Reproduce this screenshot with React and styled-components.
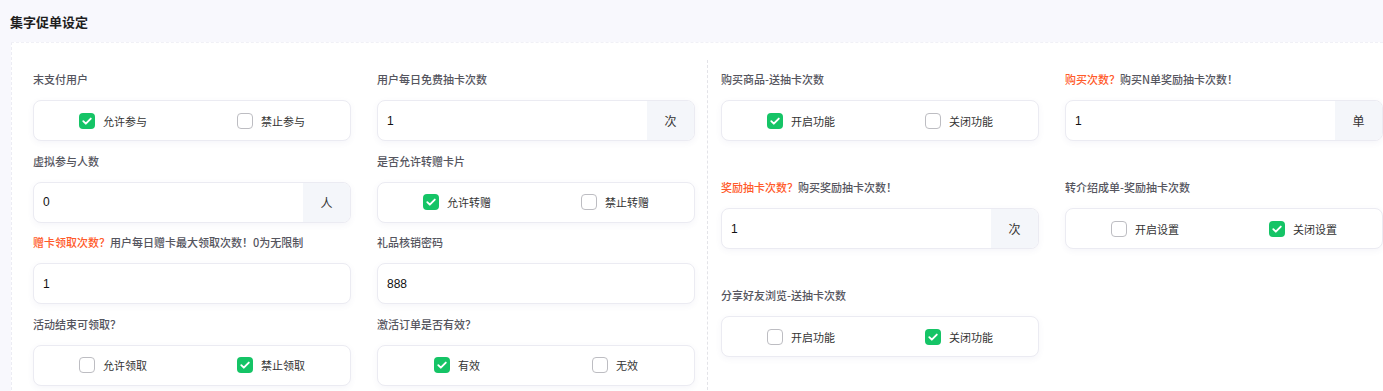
import React from 'react';
import styled, { createGlobalStyle } from 'styled-components';

const GlobalStyle = createGlobalStyle`
  body {
    margin: 0;
    background: #f8f8fd;
    font-family: "Noto Sans CJK SC", "Noto Sans", "Liberation Sans", sans-serif;
  }
`;

const Page = styled.div`
  width: 1383px;
  overflow: hidden;
`;

const Header = styled.div`
  height: 42px;
  padding-left: 10px;
  display: flex;
  align-items: center;
  font-size: 13px;
  font-weight: 700;
  color: #1f1f1f;
  box-sizing: border-box;
`;

const Card = styled.div`
  margin-left: 11px;
  background: #fff;
  border-top: 1px dashed #f0f0f6;
  border-left: 1px dashed #ececf4;
  padding: 17px 0 20px 21px;
  display: flex;
  align-items: stretch;
  min-height: 340px;
`;

const Section = styled.div`
  display: grid;
  grid-template-columns: 318px 318px;
  column-gap: 26px;
  row-gap: ${(p) => p.$rowGap}px;
  align-content: start;
  padding-top: 11px;
`;

const RightSection = styled(Section)`
  margin-left: 12px;
  padding-left: 13px;
  border-left: 1px dashed #e3e3e8;
`;

const Item = styled.div`
  display: flex;
  flex-direction: column;
`;

const Label = styled.div`
  font-size: 11px;
  line-height: 16px;
  height: 16px;
  font-weight: 500;
  color: #55555e;
  margin-bottom: 13px;
  white-space: nowrap;
`;

const Warn = styled.span`
  color: #ff5a2a;
`;

const Box = styled.div`
  height: 41px;
  box-sizing: border-box;
  border: 1px solid #ebebf2;
  border-radius: 8px;
  background: #fff;
  box-shadow: 0 2px 6px rgba(90, 90, 160, 0.06);
  display: flex;
  align-items: stretch;
  overflow: hidden;
`;

const Option = styled.div`
  flex: 1;
  display: flex;
  align-items: center;
  justify-content: center;
  gap: 8px;
  font-size: 11px;
  color: #333;
`;

const Check = styled.span`
  width: 16px;
  height: 16px;
  box-sizing: border-box;
  border-radius: 4px;
  display: inline-flex;
  align-items: center;
  justify-content: center;
  background: ${(p) => (p.$on ? '#15c466' : '#fff')};
  border: ${(p) => (p.$on ? 'none' : '1px solid #bdbdc2')};
`;

const Value = styled.div`
  flex: 1;
  display: flex;
  align-items: center;
  padding-left: 9px;
  font-size: 12px;
  font-family: "Liberation Sans", "Noto Sans CJK SC", sans-serif;
  color: #111;
`;

const Suffix = styled.div`
  width: 47px;
  background: #f4f6fa;
  display: flex;
  align-items: center;
  justify-content: center;
  font-size: 12px;
  color: #333;
`;

const Tick = () => (
  <svg width="12" height="12" viewBox="0 0 12 12">
    <path d="M2.3 6.2l2.5 2.5L9.8 3.6" fill="none" stroke="#fff" strokeWidth="1.9" strokeLinecap="round" strokeLinejoin="round" />
  </svg>
);

const Toggle = ({ options, checked }) => (
  <Box>
    {options.map((o, i) => (
      <Option key={o}>
        <Check $on={i === checked}>{i === checked && <Tick />}</Check>
        {o}
      </Option>
    ))}
  </Box>
);

const NumberField = ({ value, suffix }) => (
  <Box>
    <Value>{value}</Value>
    {suffix && <Suffix>{suffix}</Suffix>}
  </Box>
);

const Field = ({ label, warn, children }) => (
  <Item>
    <Label>
      {warn && <Warn>{warn}</Warn>}
      {label}
    </Label>
    {children}
  </Item>
);

export default function App() {
  return (
    <Page>
      <GlobalStyle />
      <Header>集字促单设定</Header>
      <Card>
        <Section $rowGap={11.5}>
          <Field label="末支付用户">
            <Toggle options={['允许参与', '禁止参与']} checked={0} />
          </Field>
          <Field label="用户每日免费抽卡次数">
            <NumberField value="1" suffix="次" />
          </Field>
          <Field label="虚拟参与人数">
            <NumberField value="0" suffix="人" />
          </Field>
          <Field label="是否允许转赠卡片">
            <Toggle options={['允许转赠', '禁止转赠']} checked={0} />
          </Field>
          <Field warn="赠卡领取次数？" label="用户每日赠卡最大领取次数！0为无限制">
            <NumberField value="1" />
          </Field>
          <Field label="礼品核销密码">
            <NumberField value="888" />
          </Field>
          <Field label="活动结束可领取？">
            <Toggle options={['允许领取', '禁止领取']} checked={1} />
          </Field>
          <Field label="激活订单是否有效？">
            <Toggle options={['有效', '无效']} checked={0} />
          </Field>
        </Section>
        <RightSection $rowGap={38}>
          <Field label="购买商品-送抽卡次数">
            <Toggle options={['开启功能', '关闭功能']} checked={0} />
          </Field>
          <Field warn="购买次数？" label="购买N单奖励抽卡次数！">
            <NumberField value="1" suffix="单" />
          </Field>
          <Field warn="奖励抽卡次数？" label="购买奖励抽卡次数！">
            <NumberField value="1" suffix="次" />
          </Field>
          <Field label="转介绍成单-奖励抽卡次数">
            <Toggle options={['开启设置', '关闭设置']} checked={1} />
          </Field>
          <Field label="分享好友浏览-送抽卡次数">
            <Toggle options={['开启功能', '关闭功能']} checked={1} />
          </Field>
        </RightSection>
      </Card>
    </Page>
  );
}
